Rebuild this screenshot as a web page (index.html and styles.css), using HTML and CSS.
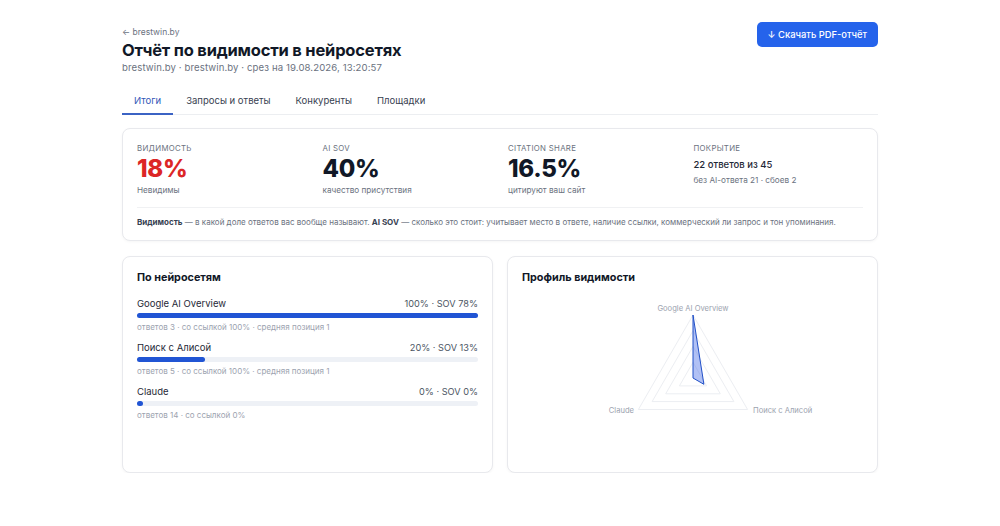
FILE: index.html
```html
<!DOCTYPE html>
<html lang="ru">
<head>
  <meta charset="UTF-8" />
  <meta name="viewport" content="width=device-width, initial-scale=1.0" />
  <title>Отчёт по видимости в нейросетях</title>
  <link rel="stylesheet" href="styles.css">
</head>
<body>
  <div class="page">
    <div class="header">
      <div>
        <a class="back" href="#">← brestwin.by</a>
        <h1>Отчёт по видимости в нейросетях</h1>
        <div class="subtitle">brestwin.by · brestwin.by · срез на 19.08.2026, 13:20:57</div>
      </div>
      <button class="btn">↓ Скачать PDF-отчёт</button>
    </div>

    <div class="tabs">
      <span class="tab active">Итоги</span>
      <span class="tab">Запросы и ответы</span>
      <span class="tab">Конкуренты</span>
      <span class="tab">Площадки</span>
    </div>

    <div class="card summary">
      <div class="stats">
        <div class="stat">
          <div class="stat-label">Видимость</div>
          <div class="stat-value red">18%</div>
          <div class="stat-sub">Невидимы</div>
        </div>
        <div class="stat">
          <div class="stat-label">AI SOV</div>
          <div class="stat-value">40%</div>
          <div class="stat-sub">качество присутствия</div>
        </div>
        <div class="stat">
          <div class="stat-label">Citation share</div>
          <div class="stat-value">16.5%</div>
          <div class="stat-sub">цитируют ваш сайт</div>
        </div>
        <div class="stat">
          <div class="stat-label">Покрытие</div>
          <div class="stat-main">22 ответов из 45</div>
          <div class="stat-sub">без AI-ответа 21 · сбоев 2</div>
        </div>
      </div>
      <p class="note"><b>Видимость</b> — в какой доле ответов вас вообще называют. <b>AI SOV</b> — сколько это стоит: учитывает место в ответе, наличие ссылки, коммерческий ли запрос и тон упоминания.</p>
    </div>

    <div class="grid">
      <div class="card panel">
        <h3>По нейросетям</h3>
        <div class="engine">
          <div class="engine-head"><span>Google AI Overview</span><span class="engine-val">100% · SOV 78%</span></div>
          <div class="track"><div class="fill" style="width: 100%"></div></div>
          <div class="engine-meta">ответов 3 · со ссылкой 100% · средняя позиция 1</div>
        </div>
        <div class="engine">
          <div class="engine-head"><span>Поиск с Алисой</span><span class="engine-val">20% · SOV 13%</span></div>
          <div class="track"><div class="fill" style="width: 20%"></div></div>
          <div class="engine-meta">ответов 5 · со ссылкой 100% · средняя позиция 1</div>
        </div>
        <div class="engine">
          <div class="engine-head"><span>Claude</span><span class="engine-val">0% · SOV 0%</span></div>
          <div class="track"><div class="fill" style="width: 0%"></div></div>
          <div class="engine-meta">ответов 14 · со ссылкой 0%</div>
        </div>
      </div>

      <div class="card panel">
        <h3>Профиль видимости</h3>
        <svg class="radar" viewBox="0 0 341 170" width="341" height="170">
          <g class="radar-grid">
            <polygon points="171,24 225.6,118.5 116.4,118.5" />
            <polygon points="171,39.8 211.9,110.6 130.1,110.6" />
            <polygon points="171,55.5 198.3,102.8 143.7,102.8" />
            <polygon points="171,71.3 184.6,94.9 157.4,94.9" />
          </g>
          <polygon class="radar-data" points="171,24 181.9,93.3 171,87" />
          <text x="171" y="19.5" text-anchor="middle">Google AI Overview</text>
          <text x="112" y="122" text-anchor="end">Claude</text>
          <text x="231" y="122">Поиск с Алисой</text>
        </svg>
      </div>
    </div>
  </div>
</body>
</html>
```

FILE: styles.css
```css
body { margin: 0; font-family: Inter, "Noto Sans", Arial, sans-serif; background: #fff; color: #111827; }
.page { width: 756px; margin: 0 auto; padding-top: 26px; }

.header { display: flex; justify-content: space-between; align-items: flex-start; }
.back { display: block; font-size: 8.5px; line-height: 12px; color: #6b7280; text-decoration: none; }
h1 { margin: 2px 0 0; font-size: 16.5px; line-height: 21px; font-weight: 700; letter-spacing: -0.2px; }
.subtitle { font-size: 9.6px; line-height: 14px; color: #6b7280; letter-spacing: 0.1px; }
.btn { margin-top: -4px; background: #2563eb; color: #fff; border: none; border-radius: 5px; height: 25px; padding: 0 11px; font-family: inherit; font-size: 9.4px; font-weight: 500; cursor: pointer; }

.tabs { display: flex; gap: 1px; margin-top: 11px; border-bottom: 1px solid #eceef1; }
.tab { padding: 8px 12px 5px; font-size: 9.5px; line-height: 14px; color: #374151; border-bottom: 2px solid transparent; margin-bottom: -1px; }
.tab.active { color: #3358b8; border-bottom-color: #3b63c4; }

.card { background: #fff; border: 1px solid #e8e9ed; border-radius: 8px; box-shadow: 0 1px 3px rgba(0,0,0,0.04); }
.summary { margin-top: 13px; padding: 14px 14px 12px; }
.stats { display: grid; grid-template-columns: repeat(4, 1fr); gap: 16px; padding-bottom: 11px; border-bottom: 1px solid #f0f1f3; }
.stat-label { font-size: 7.8px; line-height: 11px; color: #6b7280; text-transform: uppercase; letter-spacing: 0.3px; }
.stat-value { margin-top: 2px; font-size: 24px; line-height: 26px; font-weight: 800; letter-spacing: -0.3px; }
.stat-value.red { color: #dc2626; }
.stat-main { margin-top: 4px; font-size: 9.5px; line-height: 14px; font-weight: 500; color: #1f2937; }
.stat-sub { margin-top: 3px; font-size: 8.2px; line-height: 11px; color: #6b7280; }
.note { margin: 8px 0 0; font-size: 8px; line-height: 12px; color: #6b7280; }
.note b { color: #374151; font-weight: 700; }

.grid { display: grid; grid-template-columns: 1fr 1fr; gap: 14px; margin-top: 15px; }
.panel { height: 217px; box-sizing: border-box; padding: 14px; }
h3 { margin: 0; font-size: 10.8px; line-height: 14px; font-weight: 700; }

.engine { margin-top: 8.5px; }
.engine:first-of-type { margin-top: 11.5px; }
.engine-head { display: flex; justify-content: space-between; font-size: 9.5px; line-height: 13px; color: #1f2937; }
.engine-val { font-size: 9.2px; color: #4b5563; }
.track { margin-top: 3px; height: 5px; border-radius: 3px; background: #eef1f6; }
.fill { height: 5px; min-width: 6px; border-radius: 3px; background: #2155d4; }
.engine-meta { margin-top: 4.5px; font-size: 8px; line-height: 10px; color: #9ca3af; }

.radar { display: block; margin-top: 6px; overflow: visible; }
.radar-grid polygon { fill: none; stroke: #eceef2; stroke-width: 1; }
.radar-data { fill: rgba(59, 99, 230, 0.4); stroke: #2150c8; stroke-width: 1; }
.radar text { font-size: 7.6px; fill: #9ca3af; }
```
